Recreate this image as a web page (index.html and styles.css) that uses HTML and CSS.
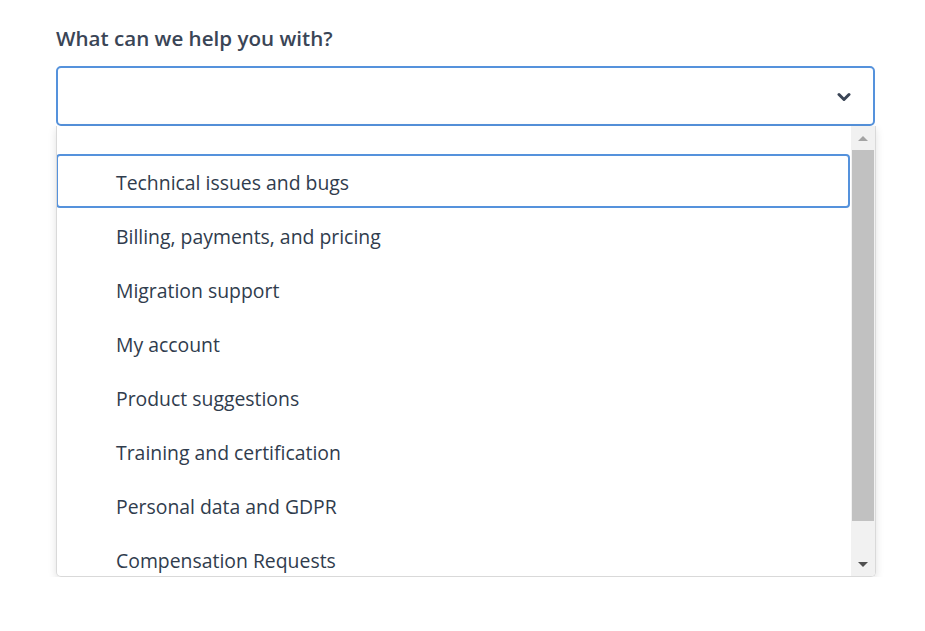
FILE: index.html
```html
<!DOCTYPE html>
<html>
<head>
<meta charset="utf-8">
<link rel="stylesheet" href="styles.css">
</head>
<body>
<div class="form">
  <label class="label">What can we help you with?</label>
  <div class="select">
    <svg class="chev" width="14" height="10" viewBox="0 0 14 10"><path d="M2 2.5 L7 7.5 L12 2.5" fill="none" stroke="#3a4556" stroke-width="3" stroke-linecap="round" stroke-linejoin="round"/></svg>
  </div>
  <div class="listbox">
    <ul class="options">
      <li class="option active">Technical issues and bugs</li>
      <li class="option">Billing, payments, and pricing</li>
      <li class="option">Migration support</li>
      <li class="option">My account</li>
      <li class="option">Product suggestions</li>
      <li class="option">Training and certification</li>
      <li class="option">Personal data and GDPR</li>
      <li class="option">Compensation Requests</li>
    </ul>
    <div class="scrollbar">
      <div class="sb-btn"><span class="tri up"></span></div>
      <div class="sb-track"><div class="sb-thumb"></div></div>
      <div class="sb-btn"><span class="tri down"></span></div>
    </div>
  </div>
</div>
</body>
</html>
```
FILE: styles.css
```css
* { box-sizing: border-box; }
html, body { margin: 0; padding: 0; background: #fff; }
body { font-family: "Open Sans", "Noto Sans", sans-serif; color: #303c4d; }
.form { width: 820px; margin-left: 56px; padding-top: 25px; }
.label { display: block; font-size: 20.6px; font-weight: 600; color: #3a4556; line-height: 26px; margin-bottom: 15px; }
.select { height: 60px; width: 819px; border: 2.5px solid #5592dc; border-radius: 5px; display: flex; align-items: center; justify-content: flex-end; padding-right: 22px; }
.chev { display: block; margin-top: 2px; }
.listbox { height: 451px; border: 1px solid #d9d9d9; border-top: none; border-radius: 0 0 5px 5px; box-shadow: 0 3px 8px rgba(0,0,0,0.12); display: flex; overflow: hidden; }
.options { list-style: none; margin: 0 1px 0 -1px; padding: 28px 0 0 0; flex: 1; }
.option { height: 54px; display: flex; align-items: center; padding-left: 58px; padding-top: 2px; font-size: 19.4px; color: #303c4d; border: 2.5px solid transparent; border-radius: 4px; }
.option.active { border-color: #5592dc; }
.scrollbar { width: 24px; background: #f1f1f1; display: flex; flex-direction: column; }
.sb-btn { height: 24px; display: flex; align-items: center; justify-content: center; }
.sb-track { flex: 1; display: flex; padding: 0 1px; }
.sb-thumb { flex: 1; height: 371px; background: #c1c1c1; }
.tri { width: 0; height: 0; border-left: 5px solid transparent; border-right: 5px solid transparent; }
.tri.up { border-bottom: 5px solid #a3a3a3; }
.tri.down { border-top: 5px solid #505050; }
```
